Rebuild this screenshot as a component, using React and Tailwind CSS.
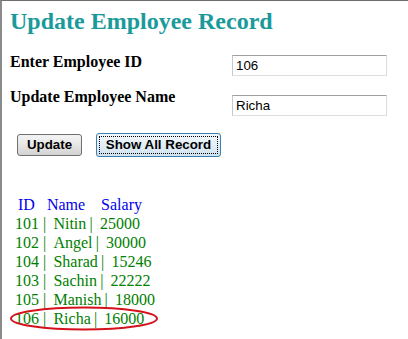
import React from "react";

const rows = [
  ["101", "Nitin", "25000"],
  ["102", "Angel", "30000"],
  ["104", "Sharad", "15246"],
  ["103", "Sachin", "22222"],
  ["105", "Manish", "18000"],
  ["106", "Richa", "16000"],
];

export default function App() {
  return (
    <div className="relative w-[408px] h-[339px] overflow-hidden bg-white border-t border-l-2 border-t-[#6e6e6e] border-l-[#8a8a8a] pl-[8px] font-['Liberation_Serif',serif]">
      <h2 className="mt-[7px] text-[24px] leading-[27px] font-bold text-[#1a9a9a]">
        Update Employee Record
      </h2>

      <div className="mt-[17px] flex items-start">
        <div className="w-[222px] text-[16px] leading-[19px] font-bold text-black">Enter Employee ID</div>
        <input
          readOnly
          value="106"
          className="mt-[3px] w-[155px] h-[21px] border border-t-[#a0a0a0] border-l-[#c8c8c8] border-r-[#dedede] border-b-[#dedede] px-[3px] text-[13.33px] font-['Liberation_Sans',Arial,sans-serif] text-black outline-none"
        />
      </div>

      <div className="mt-[11px] flex items-start">
        <div className="w-[222px] text-[16px] leading-[19px] font-bold text-black">Update Employee Name</div>
        <input
          readOnly
          value="Richa"
          className="mt-[8px] w-[155px] h-[21px] border border-t-[#a0a0a0] border-l-[#c8c8c8] border-r-[#dedede] border-b-[#dedede] px-[3px] text-[13.33px] font-['Liberation_Sans',Arial,sans-serif] text-black outline-none"
        />
      </div>

      <div className="mt-[17px] ml-[7px] flex items-center font-['Liberation_Sans',Arial,sans-serif] text-[13.33px] font-bold text-black">
        <button className="w-[65px] h-[22px] rounded-[3px] border border-[#707070] bg-gradient-to-b from-[#f4f4f4] via-[#e6e6e6] to-[#d2d2d2] leading-none">
          Update
        </button>
        <button className="ml-[14px] w-[125px] h-[24px] rounded-[3px] border border-[#3c7fb1] bg-gradient-to-b from-[#f2f8fc] via-[#e3eef6] to-[#cfe1ee] p-[2px] leading-none">
          <span className="flex h-full w-full items-center justify-center border border-dotted border-black">
            Show All Record
          </span>
        </button>
      </div>

      <div className="mt-[38px] ml-[5px] text-[16px] leading-[19px] whitespace-pre">
        <div className="-ml-[1px] text-[#0000ee]">{" ID   Name    Salary"}</div>
        {rows.map(([id, name, sal]) => (
          <div key={id} className="text-[#008000]">{`${id} | \u2009${name}\u2009| \u2009${sal}`}</div>
        ))}
      </div>

      <svg className="absolute left-[6px] top-[305px]" width="152" height="25" viewBox="0 0 152 25">
        <ellipse cx="76" cy="12.5" rx="73" ry="11" fill="none" stroke="#d4121c" strokeWidth="2" />
      </svg>
    </div>
  );
}
